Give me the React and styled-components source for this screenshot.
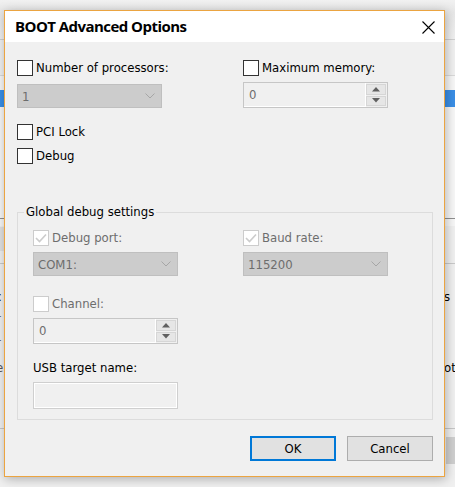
import React from 'react';
import styled, { createGlobalStyle, css } from 'styled-components';

const Global = createGlobalStyle`
  html, body { margin: 0; padding: 0; }
  body {
    width: 455px; height: 487px; overflow: hidden;
    background: #ececec;
    font-family: "DejaVu Sans Condensed", "DejaVu Sans", sans-serif;
    font-size: 13px;
  }
`;

const Desktop = styled.div`
  position: relative;
  width: 455px;
  height: 487px;
  overflow: hidden;
  background: #ececec;
`;

/* ---------- background window (partly hidden behind the dialog) ---------- */
const BackWindow = styled.div`
  position: absolute;
  left: -40px;
  top: 0;
  width: 540px;
  height: 487px;
  background: linear-gradient(#f1f1f1 0, #e7e7e7 12px, #f0f0f0 40px);
`;
const BackPiece = styled.div`
  position: absolute;
  left: ${p => p.$x}px;
  top: ${p => p.$y}px;
  width: ${p => p.$w}px;
  height: ${p => p.$h}px;
  background: ${p => p.$bg || 'transparent'};
`;
const BackText = styled.div`
  position: absolute;
  left: ${p => p.$x}px;
  top: ${p => p.$y}px;
  font-family: "DejaVu Sans Condensed", "DejaVu Sans", sans-serif;
  font-size: 13px;
  line-height: 16px;
  color: ${p => p.$c || '#000'};
  white-space: nowrap;
`;

/* ---------- dialog ---------- */
const Dialog = styled.div`
  position: absolute;
  left: 4px;
  top: 10px;
  width: 439px;
  height: 465px;
  border: 1px solid #eba441;
  background: #f0f0f0;
  box-shadow: 1px 2px 10px rgba(0, 0, 0, 0.28);
  display: flex;
  flex-direction: column;
`;

const TitleBar = styled.div`
  height: 31px;
  flex: none;
  background: #ffffff;
  display: flex;
  align-items: center;
  justify-content: space-between;
  padding: 0 9px 0 10px;
`;

const Title = styled.div`
  font-family: "Open Sans", "Noto Sans", sans-serif;
  font-weight: 700;
  font-size: 15px;
  letter-spacing: -0.55px;
  color: #000;
  margin-top: -1px;
`;

const CloseButton = styled.div`
  width: 14px;
  height: 14px;
  display: flex;
  align-items: center;
  justify-content: center;
  margin-top: 1px;
`;

const Body = styled.div`
  flex: 1;
  display: flex;
  flex-direction: column;
  padding: 18px 11px 15px 12px;
`;

const TopGrid = styled.div`
  display: grid;
  grid-template-columns: 226px 1fr;
`;

const Column = styled.div`
  display: flex;
  flex-direction: column;
`;

const Gap = styled.div`
  height: ${p => p.$h}px;
  flex: none;
`;

const CheckRow = styled.label`
  display: flex;
  align-items: center;
  height: 16px;
  gap: 3px;
  font-size: 13px;
  line-height: 16px;
  color: ${p => (p.$disabled ? '#6d6d6d' : '#000')};
  white-space: nowrap;
`;

const Box = styled.span`
  width: 14px;
  height: 14px;
  flex: none;
  border: 1px solid ${p => (p.$disabled ? '#cccccc' : '#333333')};
  background: #ffffff;
  display: flex;
  align-items: center;
  justify-content: center;
`;

const Combo = styled.div`
  height: 22px;
  width: 133px;
  box-sizing: content-box;
  border: 1px solid #bfbfbf;
  background: #cccccc;
  display: flex;
  align-items: center;
  justify-content: space-between;
  padding: 0 6px 0 4px;
  color: #6d6d6d;
  font-size: 13px;
`;

const Spin = styled.div`
  width: 143px;
  height: ${p => p.$h || 24}px;
  border: 1px solid #c6c6c6;
  background: #f0f0f0;
  display: flex;
  color: #6d6d6d;
  font-size: 13px;
`;

const SpinValue = styled.div`
  flex: 1;
  display: flex;
  align-items: center;
  padding-left: 5px;
  border-right: 1px solid #ffffff;
  border-bottom: 1px solid #ffffff;
`;

const SpinButtons = styled.div`
  width: 20px;
  display: flex;
  flex-direction: column;
  gap: 1px;
  padding: 1px 1px 1px 0;
`;

const SpinButton = styled.div`
  flex: 1;
  background: #e6e6e6;
  border: 1px solid #d6d6d6;
  display: flex;
  align-items: center;
  justify-content: center;
`;

const Group = styled.fieldset`
  margin: 40px 0 0 0;
  padding: 10px 0 10px 15px;
  border: 1px solid #dcdcdc;
  min-width: 0;
`;

const Legend = styled.legend`
  margin-left: -9px;
  padding: 0 2px;
  font-size: 13px;
  line-height: 16px;
  color: #000;
`;

const GroupGrid = styled.div`
  display: grid;
  grid-template-columns: 210px 1fr;
`;

const Label = styled.div`
  font-size: 13px;
  line-height: 16px;
  color: #000;
`;

const TextBox = styled.div`
  width: 143px;
  height: 25px;
  border: 1px solid #cfcfcf;
  box-shadow: inset 0 0 0 1px #ffffff;
  background: #f0f0f0;
`;

const ButtonRow = styled.div`
  margin-top: auto;
  display: flex;
  justify-content: flex-end;
  gap: 11px;
`;

const Button = styled.div`
  width: 86px;
  height: 25px;
  box-sizing: border-box;
  background: #e1e1e1;
  display: flex;
  align-items: center;
  justify-content: center;
  font-size: 13px;
  color: #000;
  ${p =>
    p.$default
      ? css`border: 2px solid #0078d7;`
      : css`border: 1px solid #adadad;`}
`;

/* ---------- icons ---------- */
const Chevron = () => (
  <svg width="10" height="6" viewBox="0 0 10 6">
    <path d="M0.5 0.5 L5 5 L9.5 0.5" fill="none" stroke="#a6a6a6" strokeWidth="1" />
  </svg>
);

const Tick = () => (
  <svg width="12" height="10" viewBox="0 0 12 10">
    <path d="M1 5 L4.5 8.5 L11 1.5" fill="none" stroke="#cccccc" strokeWidth="1.6" />
  </svg>
);

const Arrow = ({ down }) => (
  <svg width="8" height="5" viewBox="0 0 8 5">
    {down ? <path d="M0 0 H8 L4 4.5 Z" fill="#606060" /> : <path d="M0 4.5 H8 L4 0 Z" fill="#606060" />}
  </svg>
);

const CloseIcon = () => (
  <svg width="13" height="13" viewBox="0 0 13 13">
    <path d="M0.5 0.5 L12.5 12.5 M12.5 0.5 L0.5 12.5" stroke="#000" strokeWidth="1.1" fill="none" />
  </svg>
);

const Check = ({ label, checked, disabled }) => (
  <CheckRow $disabled={disabled}>
    <Box $disabled={disabled}>{checked && <Tick />}</Box>
    {label}
  </CheckRow>
);

const ComboBox = ({ value }) => (
  <Combo>
    <span>{value}</span>
    <Chevron />
  </Combo>
);

const SpinBox = ({ value, h }) => (
  <Spin $h={h}>
    <SpinValue>{value}</SpinValue>
    <SpinButtons>
      <SpinButton><Arrow /></SpinButton>
      <SpinButton><Arrow down /></SpinButton>
    </SpinButtons>
  </Spin>
);

export default function App() {
  return (
    <Desktop>
      <Global />
      <BackWindow>
        <BackPiece $x={0} $y={39} $w={540} $h={1} $bg="#d0d0d0" />
        <BackPiece $x={0} $y={75} $w={540} $h={1} $bg="#d9d9d9" />
        <BackPiece $x={0} $y={76} $w={540} $h={150} $bg="#f7f7f7" />
        <BackPiece $x={0} $y={90} $w={540} $h={17} $bg="#3a8ee6" />
        <BackText $x={31} $y={90} $c="#fff">C</BackText>
        <BackPiece $x={0} $y={218} $w={540} $h={1} $bg="#8f8f8f" />
        <BackPiece $x={0} $y={227} $w={48} $h={24} $bg="#e1e1e1" />
        <BackText $x={32} $y={231}>p</BackText>
        <BackPiece $x={0} $y={263} $w={540} $h={1} $bg="#c9c9c9" />
        <BackText $x={35} $y={289}>c</BackText>
        <BackText $x={484} $y={289}>s</BackText>
        <BackText $x={36} $y={311} $c="#555">r</BackText>
        <BackText $x={36} $y={335} $c="#555">r</BackText>
        <BackText $x={36} $y={360} $c="#555">e</BackText>
        <BackText $x={484} $y={360}>ot</BackText>
        <BackText $x={34} $y={384} $c="#555">r</BackText>
        <BackPiece $x={0} $y={428} $w={540} $h={1} $bg="#c6c6c6" />
        <BackPiece $x={486} $y={437} $w={40} $h={27} $bg="#cfcfcf" />
      </BackWindow>

      <Dialog>
        <TitleBar>
          <Title>BOOT Advanced Options</Title>
          <CloseButton><CloseIcon /></CloseButton>
        </TitleBar>
        <Body>
          <TopGrid>
            <Column>
              <Check label="Number of processors:" />
              <Gap $h={8} />
              <ComboBox value="1" />
              <Gap $h={16} />
              <Check label="PCI Lock" />
              <Gap $h={8} />
              <Check label="Debug" />
            </Column>
            <Column>
              <Check label="Maximum memory:" />
              <Gap $h={6} />
              <SpinBox value="0" h={24} />
            </Column>
          </TopGrid>

          <Group>
            <Legend>Global debug settings</Legend>
            <GroupGrid>
              <Column>
                <Check label="Debug port:" checked disabled />
                <Gap $h={6} />
                <ComboBox value="COM1:" />
                <Gap $h={20} />
                <Check label="Channel:" disabled />
                <Gap $h={6} />
                <SpinBox value="0" h={24} />
                <Gap $h={16} />
                <Label>USB target name:</Label>
                <Gap $h={6} />
                <TextBox />
              </Column>
              <Column>
                <Check label="Baud rate:" checked disabled />
                <Gap $h={6} />
                <ComboBox value="115200" />
              </Column>
            </GroupGrid>
          </Group>

          <ButtonRow>
            <Button $default>OK</Button>
            <Button>Cancel</Button>
          </ButtonRow>
        </Body>
      </Dialog>
    </Desktop>
  );
}
